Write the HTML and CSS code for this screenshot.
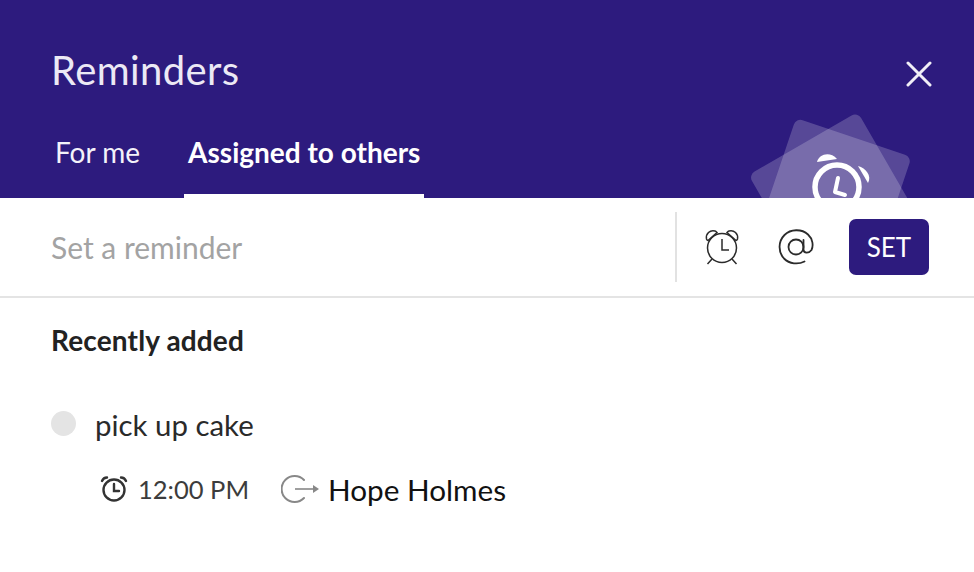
FILE: index.html
```html
<!DOCTYPE html>
<html lang="en">
<head>
<meta charset="utf-8">
<title>Reminders</title>
<link rel="stylesheet" href="styles.css">
</head>
<body>
<header class="header">
  <div class="title-row">
    <h1 class="title">Reminders</h1>
    <button class="close" aria-label="Close">
      <svg viewBox="0 0 26 26" width="26" height="26"><path d="M2 2 L24 24 M24 2 L2 24" stroke="#f1eff7" stroke-width="3" stroke-linecap="round" fill="none"/></svg>
    </button>
  </div>
  <nav class="tabs">
    <span class="tab">For me</span>
    <span class="tab tab-active">Assigned to others</span>
  </nav>
  <div class="decor" aria-hidden="true">
    <svg viewBox="0 0 180 90" width="180" height="90">
      <rect x="0" y="0" width="126" height="126" rx="7" fill="#fff" fill-opacity=".2" transform="translate(8.5 67) rotate(-30)"/>
      <rect x="0" y="0" width="122" height="122" rx="7" fill="#fff" fill-opacity=".2" transform="translate(56 10) rotate(18.6)"/>
      <circle cx="97" cy="79" r="22" fill="none" stroke="#fff" stroke-width="5.5"/>
      <path d="M98 70 L95 84 L105 87" fill="none" stroke="#fff" stroke-width="4" stroke-linecap="round" stroke-linejoin="round"/>
      <path d="M77 54 C79 46 90 43 97 51 Z" fill="#fff"/>
      <path d="M118 58 C126 60 132 68 128 75 Z" fill="#fff"/>
    </svg>
  </div>
</header>
<section class="composer">
  <div class="placeholder">Set a reminder</div>
  <div class="actions">
    <svg class="icon-clock" viewBox="0 0 38 38" width="38" height="38" fill="none" stroke="#2b2b2b" stroke-width="1.5">
      <circle cx="19" cy="20" r="14.5"/>
      <path d="M19 11 V22 H26"/>
      <path d="M3.5 11 C2.5 6 7 1.5 12 3 C13 3.3 13.5 4 14 4.5 L5 12.5 C4.3 12.3 3.7 11.7 3.5 11 Z"/>
      <path d="M34.5 11 C35.5 6 31 1.5 26 3 C25 3.3 24.5 4 24 4.5 L33 12.5 C33.7 12.3 34.3 11.7 34.5 11 Z"/>
      <path d="M9 31 L4.5 36 M29 31 L33.5 36"/>
    </svg>
    <svg class="icon-at" viewBox="0 0 38 38" width="38" height="38" fill="none" stroke="#2b2b2b" stroke-width="1.8" stroke-linecap="round">
      <circle cx="19" cy="19" r="7.5"/>
      <path d="M26.5 12 V21.5 C26.5 25.5 32 25.5 34.5 22 C36.5 18 36 11 31 6.5 C24.5 0.5 13.5 1 7.5 7 C1 13.5 1 24 7 30.5 C12.5 36 21 36.8 27.5 33.5"/>
    </svg>
    <button class="set">SET</button>
  </div>
</section>
<main class="list">
  <h2 class="section">Recently added</h2>
  <div class="item">
    <span class="dot"></span>
    <span class="item-text">pick up cake</span>
  </div>
  <div class="meta">
    <svg viewBox="0 0 28 28" width="28" height="28" fill="none" stroke="#333" stroke-width="2.4" stroke-linecap="round">
      <circle cx="14" cy="15" r="10.5"/>
      <path d="M14 9 V16 H19"/>
      <path d="M2 6 C3 3.5 5 2.5 7 2.5 M26 6 C25 3.5 23 2.5 21 2.5"/>
    </svg>
    <span class="time">12:00 PM</span>
    <svg class="icon-assign" viewBox="0 0 38 30" width="38" height="30" fill="none" stroke="#888" stroke-width="2">
      <path d="M23 6 A13 13 0 1 0 23 24" stroke-linecap="round"/>
      <path d="M14 15 H34" stroke-width="1.6"/>
      <path d="M32 11 L38 15 L32 19 Z" fill="#888" stroke="none"/>
    </svg>
    <span class="person">Hope Holmes</span>
  </div>
</main>
</body>
</html>
```
FILE: styles.css
```css
* { box-sizing: border-box; }
html, body { margin: 0; padding: 0; }
body {
  width: 974px;
  height: 572px;
  overflow: hidden;
  background: #fff;
  font-family: Lato, "Liberation Sans", sans-serif;
  color: #222;
}
.header {
  position: relative;
  height: 198px;
  background: #2d1b7e;
  padding: 46px 42px 0 51px;
  overflow: hidden;
}
.title-row {
  display: flex;
  justify-content: space-between;
  align-items: flex-start;
  height: 84px;
}
.title {
  margin: 0;
  font-size: 40px;
  line-height: 48px;
  font-weight: 400;
  letter-spacing: .4px;
  color: #ece9f5;
}
.close {
  margin-top: 15px;
  padding: 0;
  border: 0;
  background: none;
  height: 26px;
  width: 26px;
  display: block;
}
.close svg { display: block; }
.tabs {
  display: flex;
  gap: 40px;
  height: 68px;
}
.tab {
  display: block;
  padding: 3px 4px 0;
  font-size: 28px;
  line-height: 38px;
  color: #f4f2fa;
}
.tab-active {
  font-weight: 700;
  color: #fff;
  border-bottom: 4px solid #fff;
}
.decor {
  position: absolute;
  left: 740px;
  top: 108px;
  width: 180px;
  height: 90px;
}
.decor svg { display: block; }
.composer {
  display: flex;
  justify-content: space-between;
  align-items: center;
  height: 100px;
  padding: 0 45px 0 51px;
  border-bottom: 2px solid #e4e4e4;
}
.placeholder {
  font-size: 30px;
  color: #a3a3a3;
}
.actions {
  display: flex;
  align-items: center;
  height: 70px;
  border-left: 2px solid #e2e2e2;
  padding-left: 26px;
}
.icon-at { margin-left: 36px; }
.set {
  margin-left: 34px;
  width: 80px;
  height: 56px;
  border: 0;
  border-radius: 7px;
  background: #2d1b7e;
  color: #fff;
  font-family: inherit;
  font-size: 26px;
}
.list { padding: 25px 51px 0; }
.section {
  margin: 0;
  font-size: 28px;
  line-height: 34px;
  font-weight: 700;
  letter-spacing: .15px;
  color: #222;
}
.item {
  display: flex;
  align-items: center;
  margin-top: 48px;
  height: 38px;
}
.dot {
  width: 25px;
  height: 25px;
  border-radius: 50%;
  background: #e4e4e4;
  margin-top: -2px;
}
.item-text {
  margin-left: 19px;
  font-size: 29.4px;
  color: #2a2a2a;
}
.meta {
  display: flex;
  align-items: center;
  margin-top: 27px;
  margin-left: 49px;
  height: 38px;
}
.time {
  margin-left: 10px;
  font-size: 25.5px;
  color: #3c3c3c;
}
.icon-assign { margin-left: 31.5px; }
.person {
  margin-left: 9.5px;
  font-size: 29.7px;
  color: #111;
}
```
